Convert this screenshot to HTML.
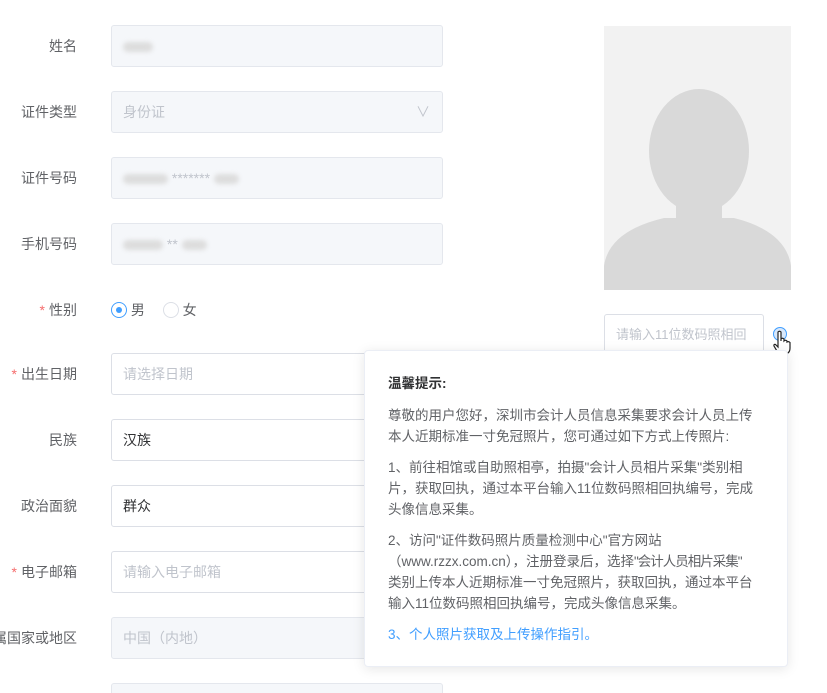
<!DOCTYPE html><html><head><meta charset="utf-8"><style>
html,body{margin:0;width:827px;height:693px;overflow:hidden}
body{background:#fff;font-family:"Liberation Sans","Noto Sans CJK SC",sans-serif;position:relative;color:#606266}
.l{position:absolute;right:750px;font-size:14px;color:#606266;text-align:right;white-space:nowrap}
.l b{color:#f56c6c;font-weight:normal;margin-right:4px}
.i{position:absolute;left:111px;border:1px solid #dcdfe6;border-radius:3px;font-size:14px;line-height:40px;padding-left:11px;box-sizing:border-box;width:332px;height:42px}
.d{background:#f5f7fa;color:#c0c4cc;border-color:#e4e7ed}
.p{color:#c0c4cc}
.blur{display:inline-block;height:10px;background:#ddd;border-radius:5px;filter:blur(2px);vertical-align:middle}
.pop{position:absolute;left:364px;top:350px;width:424px;height:317px;background:#fff;border:1px solid #ebeef5;box-shadow:0 2px 12px rgba(0,0,0,.1);border-radius:4px;box-sizing:border-box;padding:22px 30px 20px 23px;font-size:13.5px;line-height:21px;color:#606266}
.pop p{margin:0 0 10px}
.q{letter-spacing:-1px}
</style></head><body>
<div class="l" style="top:36px">姓名</div>
<div class="i d" style="top:25px"><span class="blur" style="width:30px"></span></div>
<div class="l" style="top:102px">证件类型</div>
<div class="i d" style="top:91px">身份证<span style="position:absolute;right:12px;top:0;color:#c0c4cc">&#8744;</span></div>
<div class="l" style="top:168px">证件号码</div>
<div class="i d" style="top:157px"><span class="blur" style="width:45px"></span> ******* <span class="blur" style="width:25px"></span></div>
<div class="l" style="top:234px">手机号码</div>
<div class="i d" style="top:223px"><span class="blur" style="width:40px"></span> ** <span class="blur" style="width:25px"></span></div>
<div class="l" style="top:300px"><b>*</b>性别</div>
<div style="position:absolute;left:111px;top:300px;font-size:14px;color:#606266">
<span style="display:inline-block;width:16px;height:16px;border:1px solid #409eff;border-radius:50%;vertical-align:-3px;position:relative;box-sizing:border-box"><span style="position:absolute;left:4px;top:4px;width:6px;height:6px;border-radius:50%;background:#409eff"></span></span> 男
<span style="display:inline-block;width:16px;height:16px;border:1px solid #dcdfe6;border-radius:50%;vertical-align:-3px;margin-left:14px;box-sizing:border-box"></span> 女</div>
<div class="l" style="top:364px"><b>*</b>出生日期</div>
<div class="i p" style="top:353px">请选择日期</div>
<div class="l" style="top:430px">民族</div>
<div class="i" style="top:419px;color:#303133">汉族</div>
<div class="l" style="top:496px">政治面貌</div>
<div class="i" style="top:485px;color:#303133">群众</div>
<div class="l" style="top:562px"><b>*</b>电子邮箱</div>
<div class="i p" style="top:551px">请输入电子邮箱</div>
<div class="l" style="top:628px">属国家或地区</div>
<div class="i d" style="top:617px">中国（内地）</div>
<div class="i d" style="top:683px"></div>
<div style="position:absolute;left:604px;top:26px;width:187px;height:264px;background:#f2f2f2;overflow:hidden">
<svg width="187" height="264"><ellipse cx="95" cy="125" rx="50" ry="62" fill="#d9d9d9"/><path d="M0 264 L0 240 Q5 205 60 192 L130 192 Q182 205 187 240 L187 264Z" fill="#d9d9d9"/><rect x="72" y="170" width="46" height="30" fill="#d9d9d9"/></svg></div>
<div class="i p" style="left:604px;top:314px;width:160px;height:40px;line-height:40px;font-size:13px;overflow:hidden;white-space:nowrap">请输入11位数码照相回</div>
<div style="position:absolute;left:773px;top:327px;width:14px;height:14px;border:1px solid #409eff;border-radius:50%;background:#d8e8fb;box-sizing:border-box"></div>
<svg style="position:absolute;left:772px;top:330px" width="20" height="26" viewBox="0 0 20 26"><path d="M6 2 Q7.5 0.5 9 2 L9 11 L9 9 Q10.5 7.5 12 9 L12 11 Q13.5 9.5 15 11 L15 12 Q16.5 11 18 12.5 L18 18 Q18 24 12 24 L10 24 Q7 24 5 21 L2 16 Q1.5 14 3.5 14.5 L6 17Z" fill="#fff" stroke="#222" stroke-width="1.2"/></svg>
<div class="pop">
<p style="font-weight:bold;color:#303133;margin-bottom:11px">温馨提示:</p>
<p>尊敬的用户您好，深圳市会计人员信息采集要求会计人员上传本人近期标准一寸免冠照片，您可通过如下方式上传照片:</p>
<p>1、前往相馆或自助照相亭，拍摄"会计人员相片采集"类别相片，获取回执，通过本平台输入11位数码照相回执编号，完成头像信息采集。</p>
<p>2、访问"证件数码照片质量检测中心"官方网站<br>（www.rzzx.com.cn），注册登录后，选择<span class="q">"会计人员相片采集"</span><br>类别上传本人近期标准一寸免冠照片，获取回执，通过本平台输入11位数码照相回执编号，完成头像信息采集。</p>
<p style="color:#409eff">3、个人照片获取及上传操作指引。</p>
</div>
</body></html>
